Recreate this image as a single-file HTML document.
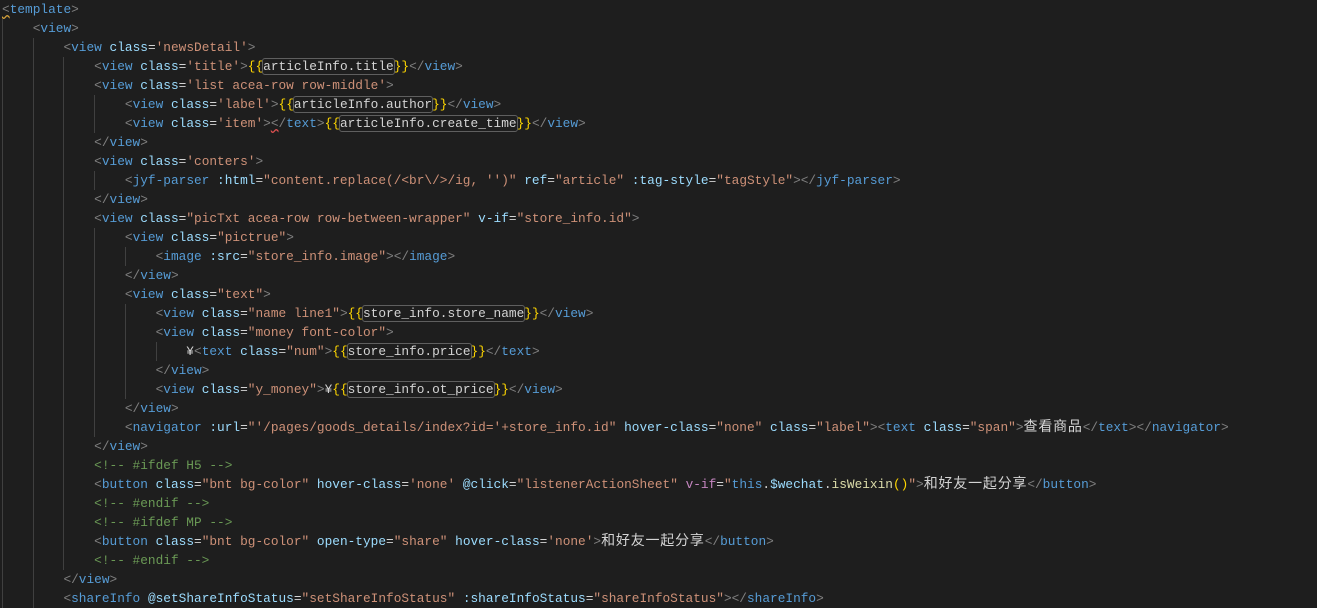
<!DOCTYPE html>
<html><head><meta charset="utf-8"><style>
html,body{margin:0;padding:0;background:#1e1e1e;width:1317px;height:607px;overflow:hidden}
pre{margin:0;position:absolute;left:2px;top:0;font-family:"Liberation Mono","Noto Sans CJK SC",monospace;font-size:12.8px;line-height:19px;color:#d4d4d4;white-space:pre}
.t{color:#569cd6}.a{color:#9cdcfe}.s{color:#ce9178}.p{color:#808080}.b{color:#ffd700}.c{color:#6a9955}.f{color:#dcdcaa}.k{color:#c586c0}
.bx{outline:1px solid #5f5f5f;border-radius:2px}
.z{font-family:"Noto Sans CJK SC",sans-serif;font-size:14px;letter-spacing:0.8px;line-height:0}
.g{position:absolute;width:1px;background:#404040}
.sq{text-decoration:underline wavy #d7a33a}
.sr{text-decoration:underline wavy #e05050}
</style></head><body>
<div class="g" style="left:2px;top:19px;height:589px"></div>
<div class="g" style="left:33px;top:38px;height:570px"></div>
<div class="g" style="left:63px;top:57px;height:513px"></div>
<div class="g" style="left:94px;top:95px;height:38px"></div>
<div class="g" style="left:94px;top:171px;height:19px"></div>
<div class="g" style="left:94px;top:228px;height:209px"></div>
<div class="g" style="left:125px;top:247px;height:19px"></div>
<div class="g" style="left:125px;top:304px;height:95px"></div>
<div class="g" style="left:156px;top:342px;height:19px"></div>
<pre><span class="p sq">&lt;</span><span class="t">template</span><span class="p">&gt;</span>
    <span class="p">&lt;</span><span class="t">view</span><span class="p">&gt;</span>
        <span class="p">&lt;</span><span class="t">view</span> <span class="a">class</span>=<span class="s">'newsDetail'</span><span class="p">&gt;</span>
            <span class="p">&lt;</span><span class="t">view</span> <span class="a">class</span>=<span class="s">'title'</span><span class="p">&gt;</span><span class="b">{{</span><span class="bx">articleInfo.title</span><span class="b">}}</span><span class="p">&lt;/</span><span class="t">view</span><span class="p">&gt;</span>
            <span class="p">&lt;</span><span class="t">view</span> <span class="a">class</span>=<span class="s">'list acea-row row-middle'</span><span class="p">&gt;</span>
                <span class="p">&lt;</span><span class="t">view</span> <span class="a">class</span>=<span class="s">'label'</span><span class="p">&gt;</span><span class="b">{{</span><span class="bx">articleInfo.author</span><span class="b">}}</span><span class="p">&lt;/</span><span class="t">view</span><span class="p">&gt;</span>
                <span class="p">&lt;</span><span class="t">view</span> <span class="a">class</span>=<span class="s">'item'</span><span class="p">&gt;</span><span class="p sr">&lt;</span><span class="p">/</span><span class="t">text</span><span class="p">&gt;</span><span class="b">{{</span><span class="bx">articleInfo.create_time</span><span class="b">}}</span><span class="p">&lt;/</span><span class="t">view</span><span class="p">&gt;</span>
            <span class="p">&lt;/</span><span class="t">view</span><span class="p">&gt;</span>
            <span class="p">&lt;</span><span class="t">view</span> <span class="a">class</span>=<span class="s">'conters'</span><span class="p">&gt;</span>
                <span class="p">&lt;</span><span class="t">jyf-parser</span> <span class="a">:html</span>=<span class="s">"content.replace(/&lt;br\/&gt;/ig, '')"</span> <span class="a">ref</span>=<span class="s">"article"</span> <span class="a">:tag-style</span>=<span class="s">"tagStyle"</span><span class="p">&gt;&lt;/</span><span class="t">jyf-parser</span><span class="p">&gt;</span>
            <span class="p">&lt;/</span><span class="t">view</span><span class="p">&gt;</span>
            <span class="p">&lt;</span><span class="t">view</span> <span class="a">class</span>=<span class="s">"picTxt acea-row row-between-wrapper"</span> <span class="a">v-if</span>=<span class="s">"store_info.id"</span><span class="p">&gt;</span>
                <span class="p">&lt;</span><span class="t">view</span> <span class="a">class</span>=<span class="s">"pictrue"</span><span class="p">&gt;</span>
                    <span class="p">&lt;</span><span class="t">image</span> <span class="a">:src</span>=<span class="s">"store_info.image"</span><span class="p">&gt;&lt;/</span><span class="t">image</span><span class="p">&gt;</span>
                <span class="p">&lt;/</span><span class="t">view</span><span class="p">&gt;</span>
                <span class="p">&lt;</span><span class="t">view</span> <span class="a">class</span>=<span class="s">"text"</span><span class="p">&gt;</span>
                    <span class="p">&lt;</span><span class="t">view</span> <span class="a">class</span>=<span class="s">"name line1"</span><span class="p">&gt;</span><span class="b">{{</span><span class="bx">store_info.store_name</span><span class="b">}}</span><span class="p">&lt;/</span><span class="t">view</span><span class="p">&gt;</span>
                    <span class="p">&lt;</span><span class="t">view</span> <span class="a">class</span>=<span class="s">"money font-color"</span><span class="p">&gt;</span>
                        ¥<span class="p">&lt;</span><span class="t">text</span> <span class="a">class</span>=<span class="s">"num"</span><span class="p">&gt;</span><span class="b">{{</span><span class="bx">store_info.price</span><span class="b">}}</span><span class="p">&lt;/</span><span class="t">text</span><span class="p">&gt;</span>
                    <span class="p">&lt;/</span><span class="t">view</span><span class="p">&gt;</span>
                    <span class="p">&lt;</span><span class="t">view</span> <span class="a">class</span>=<span class="s">"y_money"</span><span class="p">&gt;</span>¥<span class="b">{{</span><span class="bx">store_info.ot_price</span><span class="b">}}</span><span class="p">&lt;/</span><span class="t">view</span><span class="p">&gt;</span>
                <span class="p">&lt;/</span><span class="t">view</span><span class="p">&gt;</span>
                <span class="p">&lt;</span><span class="t">navigator</span> <span class="a">:url</span>=<span class="s">"'/pages/goods_details/index?id='+store_info.id"</span> <span class="a">hover-class</span>=<span class="s">"none"</span> <span class="a">class</span>=<span class="s">"label"</span><span class="p">&gt;&lt;</span><span class="t">text</span> <span class="a">class</span>=<span class="s">"span"</span><span class="p">&gt;</span><span class="z">查看商品</span><span class="p">&lt;/</span><span class="t">text</span><span class="p">&gt;&lt;/</span><span class="t">navigator</span><span class="p">&gt;</span>
            <span class="p">&lt;/</span><span class="t">view</span><span class="p">&gt;</span>
            <span class="c">&lt;!-- #ifdef H5 --&gt;</span>
            <span class="p">&lt;</span><span class="t">button</span> <span class="a">class</span>=<span class="s">"bnt bg-color"</span> <span class="a">hover-class</span>=<span class="s">'none'</span> <span class="a">@click</span>=<span class="s">"listenerActionSheet"</span> <span class="k">v-if</span>=<span class="s">"</span><span class="t">this</span>.<span class="a">$wechat</span>.<span class="f">isWeixin</span><span class="b">()</span><span class="s">"</span><span class="p">&gt;</span><span class="z">和好友一起分享</span><span class="p">&lt;/</span><span class="t">button</span><span class="p">&gt;</span>
            <span class="c">&lt;!-- #endif --&gt;</span>
            <span class="c">&lt;!-- #ifdef MP --&gt;</span>
            <span class="p">&lt;</span><span class="t">button</span> <span class="a">class</span>=<span class="s">"bnt bg-color"</span> <span class="a">open-type</span>=<span class="s">"share"</span> <span class="a">hover-class</span>=<span class="s">'none'</span><span class="p">&gt;</span><span class="z">和好友一起分享</span><span class="p">&lt;/</span><span class="t">button</span><span class="p">&gt;</span>
            <span class="c">&lt;!-- #endif --&gt;</span>
        <span class="p">&lt;/</span><span class="t">view</span><span class="p">&gt;</span>
        <span class="p">&lt;</span><span class="t">shareInfo</span> <span class="a">@setShareInfoStatus</span>=<span class="s">"setShareInfoStatus"</span> <span class="a">:shareInfoStatus</span>=<span class="s">"shareInfoStatus"</span><span class="p">&gt;&lt;/</span><span class="t">shareInfo</span><span class="p">&gt;</span></pre>
</body></html>
